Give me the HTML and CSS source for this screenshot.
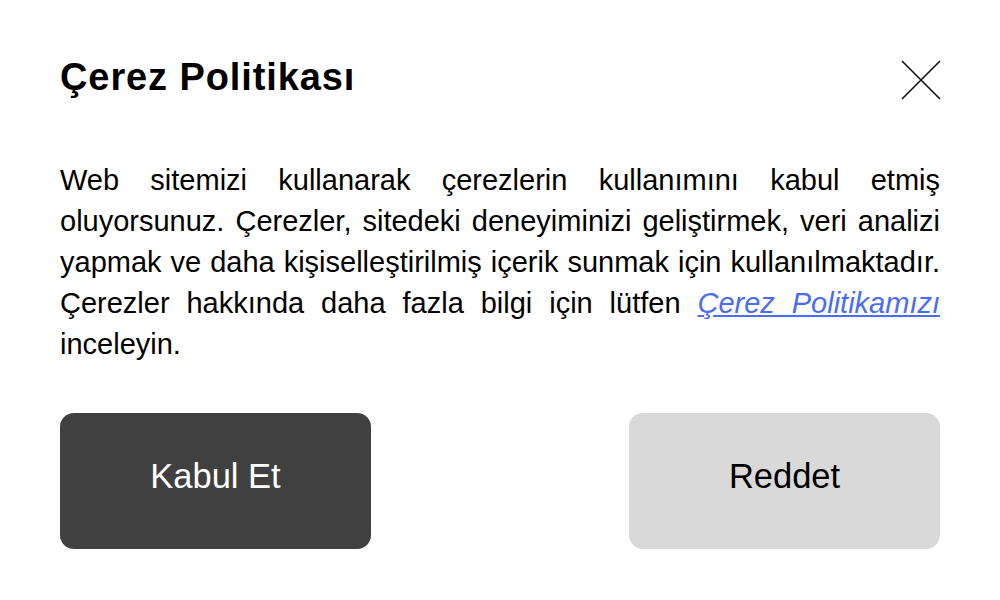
FILE: index.html
```html
<!DOCTYPE html>
<html lang="tr">
<head>
<meta charset="utf-8">
<title>Çerez Politikası</title>
<link rel="stylesheet" href="styles.css">
</head>
<body>
<div class="dialog">
  <div class="header">
    <h1 class="title">Çerez Politikası</h1>
    <button class="close" aria-label="Kapat">
      <svg width="40" height="40" viewBox="0 0 40 40"><path d="M1 1 L39 39 M39 1 L1 39" stroke="#111" stroke-width="1.6" fill="none"/></svg>
    </button>
  </div>
  <p class="text">Web sitemizi kullanarak çerezlerin kullanımını kabul etmiş oluyorsunuz. Çerezler, sitedeki deneyiminizi geliştirmek, veri analizi yapmak ve daha kişiselleştirilmiş içerik sunmak için kullanılmaktadır. Çerezler hakkında daha fazla bilgi için lütfen <a href="#" class="link">Çerez Politikamızı</a> inceleyin.</p>
  <div class="actions">
    <button class="btn btn-accept">Kabul Et</button>
    <button class="btn btn-reject">Reddet</button>
  </div>
</div>
</body>
</html>
```
FILE: styles.css
```css
html, body {
  margin: 0;
  padding: 0;
  background: #fff;
}
body {
  font-family: "Liberation Sans", Arial, sans-serif;
  color: #000;
}
.dialog {
  padding: 60px 60px 0 60px;
  display: flex;
  flex-direction: column;
}
.header {
  display: flex;
  justify-content: space-between;
  align-items: flex-start;
  height: 40px;
}
.title {
  margin: -2px 0 0 0;
  font-size: 38px;
  font-weight: bold;
  letter-spacing: 0.9px;
  line-height: 38px;
}
.close {
  border: 0;
  background: none;
  padding: 0;
  width: 40px;
  height: 40px;
  margin-right: -1px;
}
.close svg { display: block; }
.text {
  margin: 60px 0 0 0;
  font-size: 29px;
  line-height: 41px;
  text-align: justify;
}
.link {
  color: #4a6cf7;
  font-style: italic;
  text-decoration: underline;
}
.actions {
  margin-top: 48px;
  display: flex;
  justify-content: space-between;
}
.btn {
  width: 311px;
  height: 136px;
  border: 0;
  border-radius: 14px;
  padding: 0 0 10px 0;
  font-family: "Liberation Sans", Arial, sans-serif;
  font-size: 34.5px;
}
.btn-accept {
  background: #404040;
  color: #fff;
}
.btn-reject {
  background: #d9d9d9;
  color: #000;
}
```
